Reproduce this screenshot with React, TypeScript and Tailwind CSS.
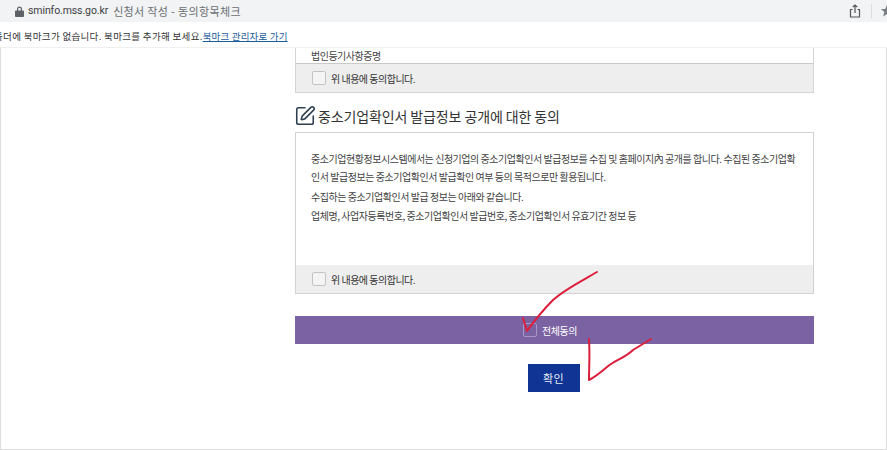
import React from "react";
import { SquarePen } from "lucide-react";

const font = "font-['Noto_Sans_CJK_KR','Noto_Sans',sans-serif]";

const AgreeRow = () => (
  <div className="flex h-[28px] items-center bg-[#eeeeee] pl-[16px]">
    <span className="h-[14px] w-[14px] rounded-[2px] border border-[#c4c4c4] bg-[#f4f4f4]" />
    <span className="ml-[5px] text-[10px] tracking-[-0.5px] text-[#333333]">위 내용에 동의합니다.</span>
  </div>
);

const BrowserBar = () => (
  <div className="h-[48px] shrink-0">
    <div className="flex h-[22px] items-center overflow-hidden bg-[#f1f3f4] pl-[15px] text-[11px]">
      <svg width="9" height="11" viewBox="0 0 9 11" className="shrink-0" fill="#5f6368">
        <path d="M1 4.500H2V3A2.500 2.500 0 0 1 7 3V4.500H8C8.500 4.500 9 5 9 5.500V10C9 10.500 8.500 11 8 11H1C.5 11 0 10.500 0 10V5.500C0 5 .5 4.500 1 4.500ZM3.200 4.500H5.800V3A1.300 1.300 0 0 0 3.200 3Z" />
      </svg>
      <span className="ml-[4px] font-['Roboto',sans-serif] text-[10.500px] tracking-[-0.1px] text-[#3c4043]">sminfo.mss.go.kr</span>
      <span className="ml-[5px] tracking-[0.35px] text-[#6b6f73]">신청서 작성 - 동의항목체크</span>
      <svg className="ml-auto shrink-0 text-[#555555]" width="12" height="14" viewBox="0 0 12 14" fill="none" stroke="currentColor" strokeWidth="1.2">
        <path d="M3.500 5.500H1.500V13H10.500V5.500H8.500" />
        <path d="M6 9V1M3.800 3L6 1L8.200 3" />
      </svg>
      <span className="ml-[10px] h-[14px] w-px shrink-0 bg-[#dcdcdc]" />
      <svg className="-mr-[6px] ml-[9px] shrink-0" width="12" height="12" viewBox="0 0 12 12" fill="#7a7d81">
        <path d="M6 0L7.800 4H12L8.700 6.900L9.800 11.500L6 9L2.200 11.500L3.300 6.900L0 4H4.200Z" />
      </svg>
    </div>
    <div className="h-[26px] overflow-hidden whitespace-nowrap border-b border-[#f0f0f0] pt-[6px] text-[9.500px] leading-[16px] text-[#333333]">
      <span className="-ml-[6px] inline-block tracking-[0.33px]">폴더에 북마크가 없습니다. 북마크를 추가해 보세요.</span>
      <span className="tracking-[0.18px] text-[#1a5b9c] underline">북마크 관리자로 가기</span>
    </div>
  </div>
);

export default function App() {
  return (
    <div className={`relative flex h-[450px] w-[887px] flex-col overflow-hidden bg-white ${font}`}>
      <BrowserBar />
      <div className="flex-1 border-x border-b border-[#dddddd] border-t-0 pl-[1px]">
        <main className="ml-[293px] w-[519px]">
          <div className="border-x border-b border-[#d4d4d4]">
            <div className="flex h-[15px] items-center pl-[15px] text-[10px] tracking-[-0.5px] text-[#444444]">법인등기사항증명</div>
            <div className="border-t border-[#c9c9c9]">
              <AgreeRow />
            </div>
          </div>

          <h2 className="mt-[12px] flex h-[22px] items-center text-[14px] leading-[22px] tracking-[-0.12px] text-[#333333]">
            <SquarePen size={22} strokeWidth={1.7} className="-ml-[1px] mr-[2px] text-[#2d3f50]" />
            중소기업확인서 발급정보 공개에 대한 동의
          </h2>

          <section className="mt-[5px] border border-[#d2d2d2]">
            <div className="h-[132px] px-[15px] pt-[17px] text-[10px] tracking-[-0.46px] text-[#3f3f3f]">
              <p className="h-[18px] leading-[18px]">
                중소기업현황정보시스템에서는 신청기업의 중소기업확인서 발급정보를 수집 및 홈페이지內 공개를 합니다. 수집된 중소기업확
              </p>
              <p className="h-[20px] leading-[18px]">인서 발급정보는 중소기업확인서 발급확인 여부 등의 목적으로만 활용됩니다.</p>
              <p className="h-[19px] leading-[18px]">수집하는 중소기업확인서 발급 정보는 아래와 같습니다.</p>
              <p className="h-[18px] leading-[18px]">업체명, 사업자등록번호, 중소기업확인서 발급번호, 중소기업확인서 유효기간 정보 등</p>
            </div>
            <AgreeRow />
          </section>

          <div className="mt-[22px] flex h-[28px] items-center justify-center bg-[#7b62a3] pr-[9px]">
            <span className="h-[14px] w-[14px] rounded-[2px] border border-[#a996c4]" />
            <span className="ml-[5px] text-[10px] tracking-[-0.4px] text-white">전체동의</span>
          </div>

          <div className="mt-[20px] flex justify-center pr-[2px]">
            <button className="h-[28px] w-[52px] bg-[#0f3494] text-[11px] tracking-[0.5px] text-[#e8ecf6]">확인</button>
          </div>
        </main>
      </div>

      <svg className="pointer-events-none absolute left-0 top-0" width="887" height="450" fill="none" stroke="#dc1e3c" strokeWidth="2" strokeLinecap="round" strokeLinejoin="round">
        <path d="M597 272C580 282 565 289 553 300C543 310 535 320 527 331L523 318" />
        <path d="M589 339C590 355 589 368 589 380C595 377 600 373 607 367C615 360 625 358 633 350L651 339" />
      </svg>
    </div>
  );
}
